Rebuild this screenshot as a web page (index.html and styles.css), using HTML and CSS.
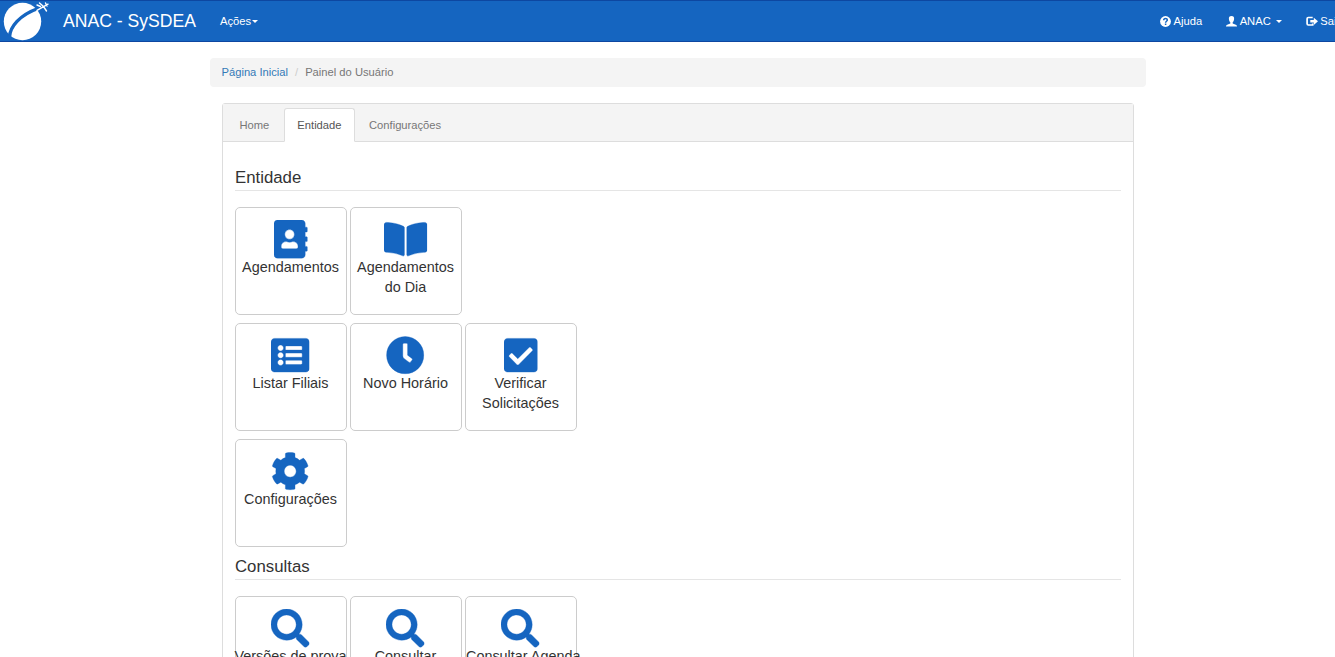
FILE: index.html
```html
<!DOCTYPE html>
<html lang="pt-BR">
<head>
<meta charset="utf-8">
<title>ANAC - SySDEA</title>
<link rel="stylesheet" href="styles.css">
</head>
<body>
<svg class="sprite" aria-hidden="true">
  <symbol id="address-book" viewBox="0 0 448 512"><path d="M436 160c6.6 0 12-5.4 12-12v-40c0-6.6-5.4-12-12-12h-20V48c0-26.500-21.500-48-48-48H48C21.500 0 0 21.500 0 48v416c0 26.500 21.500 48 48 48h320c26.500 0 48-21.500 48-48v-48h20c6.600 0 12-5.400 12-12v-40c0-6.600-5.400-12-12-12h-20v-64h20c6.600 0 12-5.400 12-12v-40c0-6.600-5.400-12-12-12h-20v-64h20zm-228-32c35.300 0 64 28.700 64 64s-28.700 64-64 64-64-28.700-64-64 28.700-64 64-64zm112 236.800c0 10.600-10 19.200-22.400 19.200H118.400C106 384 96 375.400 96 364.800v-19.200c0-31.800 30.100-57.600 67.200-57.600h5c12.300 5.100 25.700 8 39.800 8s27.600-2.900 39.800-8h5c37.100 0 67.200 25.800 67.200 57.600v19.200z"/></symbol>
  <symbol id="book-open" viewBox="0 0 576 512"><path d="M542.22 32.05c-54.8 3.11-163.72 14.43-230.96 55.59-4.64 2.84-7.27 7.89-7.27 13.17v363.87c0 11.55 12.63 18.85 23.28 13.49 69.18-34.82 169.23-44.32 218.7-46.92 16.89-.89 30.02-14.43 30.02-30.66V62.75c.01-17.71-15.35-31.74-33.77-30.7zM264.73 87.64C197.5 46.48 88.58 35.17 33.78 32.05 15.36 31.01 0 45.04 0 62.75V400.6c0 16.24 13.13 29.78 30.02 30.66 49.49 2.6 149.59 12.11 218.77 46.95 10.62 5.35 23.21-1.94 23.21-13.46V100.63c0-5.29-2.62-10.14-7.27-12.99z"/></symbol>
  <symbol id="list-alt" viewBox="0 0 512 512"><path d="M464 480H48c-26.51 0-48-21.49-48-48V80c0-26.51 21.49-48 48-48h416c26.51 0 48 21.49 48 48v352c0 26.51-21.49 48-48 48zM128 120c-22.091 0-40 17.909-40 40s17.909 40 40 40 40-17.909 40-40-17.909-40-40-40zm0 96c-22.091 0-40 17.909-40 40s17.909 40 40 40 40-17.909 40-40-17.909-40-40-40zm0 96c-22.091 0-40 17.909-40 40s17.909 40 40 40 40-17.909 40-40-17.909-40-40-40zm288-136v-32c0-6.627-5.373-12-12-12H204c-6.627 0-12 5.373-12 12v32c0 6.627 5.373 12 12 12h200c6.627 0 12-5.373 12-12zm0 96v-32c0-6.627-5.373-12-12-12H204c-6.627 0-12 5.373-12 12v32c0 6.627 5.373 12 12 12h200c6.627 0 12-5.373 12-12zm0 96v-32c0-6.627-5.373-12-12-12H204c-6.627 0-12 5.373-12 12v32c0 6.627 5.373 12 12 12h200c6.627 0 12-5.373 12-12z"/></symbol>
  <symbol id="clock" viewBox="0 0 512 512"><path d="M256,8C119,8,8,119,8,256S119,504,256,504,504,393,504,256,393,8,256,8Zm92.49,313h0l-20,25a16,16,0,0,1-22.49,2.5h0l-67-49.72a40,40,0,0,1-15-31.23V112a16,16,0,0,1,16-16h32a16,16,0,0,1,16,16V256l58,42.5A16,16,0,0,1,348.49,321Z"/></symbol>
  <symbol id="check-square" viewBox="0 0 448 512"><path d="M400 480H48c-26.51 0-48-21.49-48-48V80c0-26.51 21.49-48 48-48h352c26.51 0 48 21.49 48 48v352c0 26.51-21.49 48-48 48zm-204.686-98.059l184-184c6.248-6.248 6.248-16.379 0-22.627l-22.627-22.627c-6.248-6.248-16.379-6.249-22.628 0L184 302.745l-70.059-70.059c-6.248-6.248-16.379-6.248-22.628 0l-22.627 22.627c-6.248 6.248-6.248 16.379 0 22.627l104 104c6.249 6.25 16.379 6.25 22.628.001z"/></symbol>
  <symbol id="cog" viewBox="0 0 512 512"><path d="M487.4 315.7l-42.6-24.6c4.3-23.2 4.3-47 0-70.2l42.6-24.6c4.9-2.8 7.1-8.6 5.5-14-11.1-35.6-30-67.8-54.7-94.6-3.8-4.1-10-5.1-14.8-2.3L380.8 110c-17.9-15.4-38.5-27.3-60.8-35.1V25.8c0-5.6-3.9-10.5-9.4-11.7-36.7-8.2-74.3-7.8-109.2 0-5.5 1.2-9.4 6.1-9.4 11.7V75c-22.2 7.9-42.8 19.8-60.8 35.1L88.7 85.5c-4.9-2.8-11-1.9-14.8 2.3-24.7 26.7-43.6 58.9-54.7 94.6-1.7 5.4.6 11.2 5.5 14L67.3 221c-4.3 23.2-4.3 47 0 70.2l-42.6 24.6c-4.9 2.8-7.1 8.6-5.5 14 11.1 35.6 30 67.8 54.7 94.6 3.8 4.1 10 5.1 14.8 2.3l42.6-24.6c17.9 15.4 38.5 27.3 60.8 35.1v49.2c0 5.6 3.9 10.5 9.4 11.7 36.7 8.2 74.3 7.8 109.2 0 5.5-1.2 9.4-6.1 9.4-11.7v-49.2c22.2-7.9 42.8-19.8 60.8-35.1l42.6 24.6c4.9 2.8 11 1.9 14.8-2.3 24.7-26.7 43.6-58.9 54.7-94.6 1.5-5.5-.7-11.3-5.6-14.1zM256 336c-44.1 0-80-35.9-80-80s35.9-80 80-80 80 35.9 80 80-35.9 80-80 80z"/></symbol>
  <symbol id="search" viewBox="0 0 512 512"><path d="M505 442.7L405.3 343c-4.5-4.5-10.6-7-17-7H372c27.6-35.3 44-79.7 44-128C416 93.1 322.9 0 208 0S0 93.1 0 208s93.1 208 208 208c48.3 0 92.7-16.4 128-44v16.3c0 6.4 2.5 12.5 7 17l99.7 99.7c9.4 9.4 24.6 9.4 33.9 0l28.3-28.3c9.4-9.4 9.4-24.6.1-34zM208 336c-70.7 0-128-57.2-128-128 0-70.7 57.2-128 128-128 70.7 0 128 57.2 128 128 0 70.7-57.2 128-128 128z"/></symbol>
</svg>

<nav class="navbar">
  <svg class="logo" viewBox="0 0 52 40">
    <circle cx="22.500" cy="20.500" r="18.700" fill="#fff"/>
    <path d="M9.500 36C10 26 19.500 14 38 7.500" fill="none" stroke="#1565c0" stroke-width="3.400"/>
    <path d="M37 9.300 48 3.200M39.500 2 43.500 5.500 46.500 10M37 4l3.500 1.500M45.500 2l1.500 3" fill="none" stroke="#fff" stroke-width="1.400" stroke-linecap="round"/>
  </svg>
  <a class="brand">ANAC - SySDEA</a>
  <a class="nav-link">Ações<span class="caret"></span></a>
  <div class="nav-right">
    <a class="nav-link">
      <svg class="glyph" viewBox="0 0 11 11"><circle cx="5.500" cy="5.500" r="5.400"/><path d="M3.700 4.300C3.700 1.700 7.400 1.900 7.300 4.100 7.200 5.300 5.600 5.300 5.600 6.700M5.600 7.500v1.500" fill="none" stroke="#1565c0" stroke-width="1.500"/></svg>Ajuda</a>
    <a class="nav-link user">
      <svg class="glyph" viewBox="0 0 11 11"><path d="M5.500 0C3.500 0 2.700 1.300 2.900 3c.1 1.600.7 2.700 1.400 3.300v1.100L1.200 8.700C.4 9 0 9.500 0 10.500h11c0-1-.4-1.500-1.200-1.800L6.700 7.400V6.300C7.400 5.700 8 4.600 8.100 3 8.300 1.300 7.500 0 5.500 0z"/></svg>ANAC <span class="caret gap"></span></a>
    <a class="nav-link exit">
      <svg class="glyph wide" viewBox="0 0 12 11"><path d="M6.700 1.500H2.300Q1.100 1.500 1.100 2.700v5.100Q1.100 9 2.300 9H6.700V7.400" fill="none" stroke="#fff" stroke-width="1.700"/><path d="M4.300 4.100h3.500V1.700L12 5.300 7.800 8.900V6.500H4.300z"/></svg>Sair</a>
  </div>
</nav>

<main class="container">
  <div class="breadcrumb"><a class="crumb">Página Inicial</a><span class="slash">/</span><span>Painel do Usuário</span></div>
  <section class="panel">
    <div class="tabs">
      <a class="tab">Home</a>
      <a class="tab active">Entidade</a>
      <a class="tab last">Configurações</a>
    </div>
    <div class="panel-body">
      <h2 class="heading">Entidade</h2>
      <div class="row">
        <a class="tile"><svg class="icon narrow"><use href="#address-book"/></svg><span>Agendamentos</span></a>
        <a class="tile"><svg class="icon broad"><use href="#book-open"/></svg><span>Agendamentos</span><span>do Dia</span></a>
      </div>
      <div class="row">
        <a class="tile"><svg class="icon"><use href="#list-alt"/></svg><span>Listar Filiais</span></a>
        <a class="tile"><svg class="icon"><use href="#clock"/></svg><span>Novo Horário</span></a>
        <a class="tile"><svg class="icon narrow"><use href="#check-square"/></svg><span>Verificar</span><span>Solicitações</span></a>
      </div>
      <div class="row">
        <a class="tile"><svg class="icon"><use href="#cog"/></svg><span>Configurações</span></a>
      </div>
      <h2 class="heading">Consultas</h2>
      <div class="row">
        <a class="tile"><svg class="icon"><use href="#search"/></svg><span>Versões de prova</span></a>
        <a class="tile"><svg class="icon"><use href="#search"/></svg><span>Consultar</span></a>
        <a class="tile overflowing"><svg class="icon"><use href="#search"/></svg><span>Consultar Agenda</span></a>
      </div>
    </div>
  </section>
</main>
</body>
</html>
```

FILE: styles.css
```css
* { box-sizing: border-box; }
body {
  margin: 0;
  height: 657px;
  overflow: hidden;
  background: #fff;
  color: #333;
  font: 11.2px/16px "Liberation Sans", Arial, sans-serif;
}
.sprite { display: none; }
.navbar {
  display: flex;
  align-items: center;
  height: 42px;
  background: #1565c0;
  border-top: 1px solid #0d47a1;
  border-bottom: 1px solid #0d47a1;
  color: #fff;
  overflow: hidden;
  white-space: nowrap;
}
.logo { width: 52px; height: 40px; flex: none; }
.brand { margin-left: 11px; width: 157px; flex: none; font-size: 17.6px; line-height: 20px; }
.nav-link { display: flex; align-items: center; flex: none; }
.nav-right { display: flex; flex: none; width: 175px; margin-left: auto; }
.user { margin-left: 24px; }
.exit { margin-left: 24px; }
.caret { border: 3px solid transparent; border-top-color: #fff; border-bottom: 0; margin-left: 1px; }
.caret.gap { margin-left: 5px; }
.glyph { width: 11px; height: 11px; margin-right: 2.5px; fill: #fff; }
.glyph.wide { width: 12px; }

.container { width: 936px; margin: 16px 0 0 210px; }
.breadcrumb {
  display: flex;
  height: 29px;
  padding: 6px 11.5px;
  background: #f4f4f4;
  border-radius: 4px;
  color: #777;
}
.crumb { color: #337ab7; }
.slash { color: #ccc; margin: 0 7px; }
.panel {
  width: 912px;
  margin: 16px 0 0 12px;
  border: 1px solid #ddd;
  border-radius: 3px 3px 0 0;
}
.tabs {
  display: flex;
  height: 38px;
  padding: 4px 0 0 3.5px;
  background: #f4f4f4;
  border-bottom: 1px solid #ddd;
  color: #777;
}
.tab { height: 34px; padding: 8px 12px; border: 1px solid transparent; }
.active { margin-left: 2px; background: #fff; color: #555; border-color: #ddd; border-bottom-color: #fff; border-radius: 3px 3px 0 0; }
.last { margin-left: 1.5px; }
.panel-body { padding: 24px 12px 0; }
.heading {
  margin: 0 0 16px;
  height: 25px;
  font-size: 16.8px;
  font-weight: 400;
  line-height: 23px;
  border-bottom: 1px solid #e5e5e5;
}
.row { display: flex; gap: 3px; margin-bottom: 8px; }
.tile {
  display: flex;
  flex-direction: column;
  align-items: center;
  flex: none;
  width: 112px;
  height: 108px;
  padding: 11.6px 1px 0 0;
  border: 1px solid #ccc;
  border-radius: 5px;
  font-size: 14.4px;
  line-height: 20px;
  white-space: nowrap;
}
.overflowing { align-items: flex-start; }
.overflowing .icon { align-self: center; }
.icon {
  flex: none;
  width: 38.4px;
  height: 38.4px;
  margin-bottom: -1px;
  fill: #1565c0;
  stroke: #1565c0;
  stroke-width: 5px;
  overflow: visible;
}
.narrow { width: 33.6px; }
.broad { width: 43.2px; }
```
